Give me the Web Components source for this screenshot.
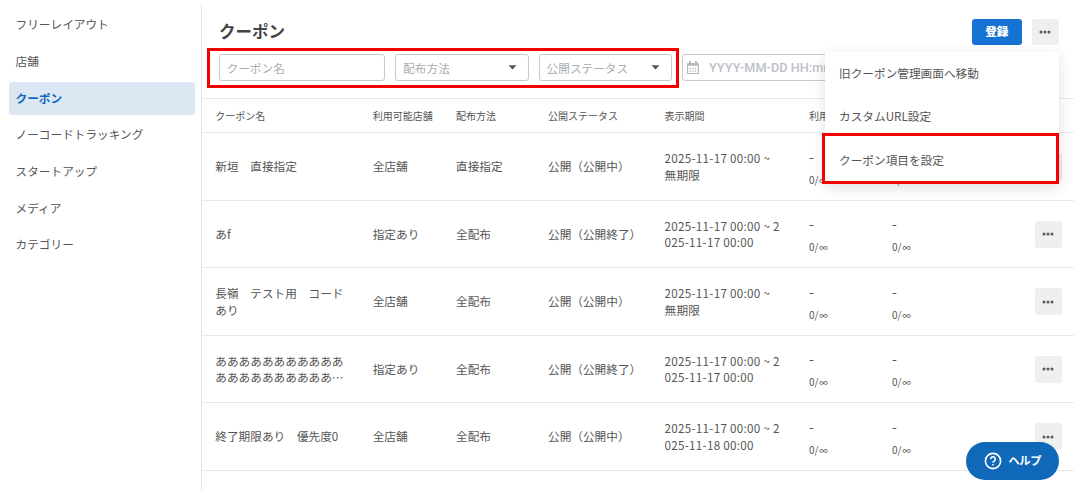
<!DOCTYPE html>
<html lang="ja">
<head>
<meta charset="utf-8">
<title>クーポン</title>
<style>
html,body{margin:0;height:100%;overflow:hidden;background:#fff}
body{font-family:"Noto Sans CJK JP","Noto Sans",sans-serif;font-size:11.67px;color:#555}
</style>
</head>
<body>
<coupon-app></coupon-app>
<script>
const define=(name,html)=>customElements.define(name,class extends HTMLElement{
  connectedCallback(){
    if(this.shadowRoot)return;
    const t=document.createElement('template');
    t.innerHTML=typeof html==='function'?html(this):html;
    this.attachShadow({mode:'open'}).append(t.content.cloneNode(true));
  }
});

define('nav-item',`<style>
:host{display:flex;align-items:center;height:33px;padding-left:7px;border-radius:3px;line-height:1}
:host([active]){background:#dbe7f3;color:#1266bb;font-weight:700}
span{padding-bottom:1.4px}
</style><span><slot></slot></span>`);

define('side-nav',`<style>
:host{display:flex;flex-direction:column;gap:3.7px;box-sizing:border-box;width:201px;padding:8.4px 6.5px 0 8.5px;flex:none}
</style><slot></slot>`);

define('more-button',`<style>
:host{display:flex;align-items:center;justify-content:center;width:26.7px;height:26.7px;background:#efefef;border-radius:3px}
svg{display:block}
</style><svg width="12" height="4" viewBox="0 0 12 4" fill="#5a5a5a"><circle cx="2" cy="2" r="1.5"/><circle cx="6" cy="2" r="1.5"/><circle cx="10" cy="2" r="1.5"/></svg>`);

define('primary-button',`<style>
:host{display:flex;align-items:center;justify-content:center;width:50px;height:26.7px;background:#1672d3;border-radius:3px;color:#fff;font-weight:900;line-height:1}
span{padding-bottom:2px}
</style><span><slot></slot></span>`);

define('filter-field',`<style>
:host{display:flex;align-items:center;box-sizing:border-box;height:27px;border:1px solid #c9c9c9;border-radius:3px;padding:0 10.5px 0 7px;color:#a9abb0;line-height:1;white-space:nowrap;background:#fff}
span{flex:1}
svg{display:none}
:host([select]) .arrow{display:block}
:host([date]){padding-left:3.5px;color:#bcc0c8}
:host([date]) .cal{display:block;margin-right:8.5px}
:host([date]) span{font-family:Roboto,"Noto Sans CJK JP",sans-serif;font-size:12.7px;font-weight:500;letter-spacing:.04px;padding-top:1px}
</style>
<svg class="cal" width="14" height="14" viewBox="0 0 14 14"><path d="M1 4.8V3q0-1 1-1h10q1 0 1 1v1.8zM3 0h2v3H3zM9 0h2v3H9z" fill="#b8b8b8"/><path d="M1.6 4.5v8h10.8v-8" fill="none" stroke="#b8b8b8" stroke-width="1.2"/><path d="M6.2 7h1.4v1.2H6.2zM8.8 7h1.4v1.2H8.8zM3.6 9.6H5v1.2H3.6zM6.2 9.6h1.4v1.2H6.2zM8.8 9.6h1.4v1.2H8.8zM3.6 7H5v1.2H3.6z" fill="#b8b8b8"/></svg>
<span><slot></slot></span>
<svg class="arrow" width="9" height="5" viewBox="0 0 9 5"><path d="M.5.3h8L4.5 4.5z" fill="#555"/></svg>`);

define('filter-bar',`<style>
:host{display:flex;gap:10px;padding-left:16.5px;margin-top:9.3px}
</style><slot></slot>`);

define('page-head',`<style>
:host{display:block;box-sizing:border-box;height:95.3px;padding-top:15px;border-bottom:1px solid #e8e9ed}
.top{display:flex;align-items:center;gap:10px;padding:0 15.5px 0 17px}
h1{flex:1;margin:0;padding-bottom:1px;font-size:16.5px;line-height:1;font-weight:700;color:#444}
</style><div class="top"><h1><slot name="title"></slot></h1><slot name="actions"></slot></div><slot></slot>`);

const columns='grid-template-columns:157.4px 83.3px 92px 116.5px 144.5px 83px 1fr 26.7px';
define('table-head',`<style>
:host{display:grid;${columns};align-items:center;box-sizing:border-box;height:34.7px;padding:0 12.5px 0 13.3px;border-bottom:1px solid #e8e9ed;font-size:10px;line-height:1;white-space:nowrap}
</style><span>クーポン名</span><span>利用可能店舗</span><span>配布方法</span><span>公開ステータス</span><span>表示期間</span><span>利用数</span>`);

define('usage-cell',e=>`<style>
:host{display:flex;flex-direction:column;gap:13px;font-size:10px;line-height:10px;padding-top:3px}
.dash{height:10px;font-size:14px;line-height:9px}
.inf{font-size:8.5px;font-weight:500;margin-left:.7px;letter-spacing:0}
</style><span class="dash">${e.hasAttribute('covered')?'':'-'}</span><span>0/<span class="inf">∞</span></span>`);

define('coupon-row',e=>`<style>
:host{display:grid;${columns};align-items:center;box-sizing:border-box;height:67.5px;padding:0 12.5px 0 13.3px;border-bottom:1px solid #e8e9ed;line-height:16.5px}
.name{width:129.5px;line-break:anywhere;word-break:break-all}
.date{width:119px;word-break:break-all;letter-spacing:.28px}
</style><div class="name"><slot></slot></div><div>${e.getAttribute('shop')}</div><div>${e.getAttribute('method')}</div><div>${e.getAttribute('status')}</div><div class="date">${e.getAttribute('period')}</div><usage-cell></usage-cell><usage-cell ${e.hasAttribute('covered')?'covered':''}></usage-cell><more-button></more-button>`);

define('action-menu',`<style>
:host{position:absolute;left:825px;top:51.5px;width:233.5px;height:132px;box-sizing:border-box;background:#fff;border-radius:3px;box-shadow:0 4px 14px rgba(0,0,0,.13);display:flex;flex-direction:column}
</style><slot></slot>`);
define('menu-entry',`<style>
:host{display:flex;align-items:center;height:43.4px;padding-left:14px;line-height:1}
span{padding-bottom:1px}
</style><span><slot></slot></span>`);

define('focus-frame',`<style>
:host{position:absolute;box-sizing:border-box;border:3px solid #f60000;pointer-events:none}
</style>`);

define('help-button',`<style>
:host{position:absolute;left:966px;top:442px;width:92.5px;height:38px;border-radius:19px;background:#1068b8;color:#fff;display:flex;align-items:center;justify-content:center;gap:7px;font-weight:700;line-height:1}
svg{display:block}
span{font-size:11.3px;letter-spacing:-.5px}
</style><svg width="18" height="18" viewBox="0 0 18 18" fill="none" stroke="#fff" stroke-width="1.6"><circle cx="9" cy="9" r="7.6"/><path d="M6.7 7.2a2.3 2.3 0 1 1 3.5 1.9Q9 9.9 9 10.8M9 12v1.6"/></svg><span>ヘルプ</span>`);

define('coupon-app',`<style>
:host{display:flex;position:relative;width:1086px;height:493px;overflow:hidden}
main{box-sizing:border-box;width:873px;height:486px;margin-top:3.5px;border-left:1px solid #e6e7e9}
.filters{left:207px;top:48px;width:472px;height:40px}
.entry{left:822px;top:133px;width:237px;height:51px}
</style>
<side-nav><nav-item>フリーレイアウト</nav-item><nav-item>店舗</nav-item><nav-item active>クーポン</nav-item><nav-item>ノーコードトラッキング</nav-item><nav-item>スタートアップ</nav-item><nav-item>メディア</nav-item><nav-item>カテゴリー</nav-item></side-nav>
<main>
<page-head><span slot="title">クーポン</span><primary-button slot="actions">登録</primary-button><more-button slot="actions"></more-button>
<filter-bar><filter-field style="width:166.7px">クーポン名</filter-field><filter-field select style="width:133.4px">配布方法</filter-field><filter-field select style="width:133.4px">公開ステータス</filter-field><filter-field date style="width:180px">YYYY-MM-DD HH:mm</filter-field></filter-bar></page-head>
<table-head></table-head>
<coupon-row covered shop="全店舗" method="直接指定" status="公開（公開中）" period="2025-11-17 00:00 ~ 無期限">新垣　直接指定</coupon-row>
<coupon-row shop="指定あり" method="全配布" status="公開（公開終了）" period="2025-11-17 00:00 ~ 2025-11-17 00:00">あf</coupon-row>
<coupon-row shop="全店舗" method="全配布" status="公開（公開中）" period="2025-11-17 00:00 ~ 無期限">長嶺　テスト用　コードあり</coupon-row>
<coupon-row shop="指定あり" method="全配布" status="公開（公開終了）" period="2025-11-17 00:00 ~ 2025-11-17 00:00">あああああああああああああああああああああ…</coupon-row>
<coupon-row shop="全店舗" method="全配布" status="公開（公開中）" period="2025-11-17 00:00 ~ 2025-11-18 00:00">終了期限あり　優先度0</coupon-row>
</main>
<action-menu><menu-entry>旧クーポン管理画面へ移動</menu-entry><menu-entry>カスタムURL設定</menu-entry><menu-entry>クーポン項目を設定</menu-entry></action-menu>
<focus-frame class="filters"></focus-frame><focus-frame class="entry"></focus-frame>
<help-button></help-button>`);
</script>
</body>
</html>
